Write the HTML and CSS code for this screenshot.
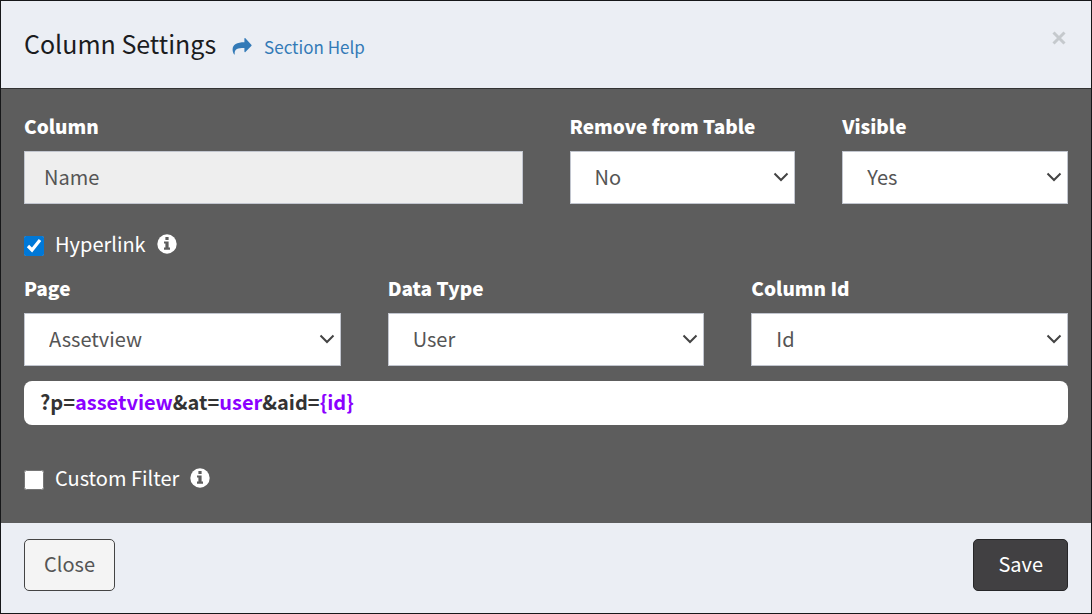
FILE: index.html
```html
<!DOCTYPE html>
<html lang="en">
  <head>
    <meta charset="UTF-8" />
    <title>Column Settings</title>
    <link rel="stylesheet" href="styles.css">
  </head>
  <body>
    <div class="modal">
      <header class="modal-header">
        <h1>Column Settings</h1>
        <a class="help-link" href="#help">
          <svg width="20" height="17" viewBox="0 0 20 17" aria-hidden="true">
            <path d="M12.4 0.6v3.6C5 4.2 0.6 6.4 0.6 11.6c0 1.800.5 3.300 1.400 4.700.3.500.8.300.7-.2C2.300 11.200 5 9.900 12.400 9.900v3.700c0 .6.6.9 1 .5l5.900-6c.4-.4.4-1 0-1.400L13.400.2c-.4-.4-1-.2-1 .4z" />
          </svg>
          Section Help
        </a>
        <button class="dismiss" type="button" aria-label="Dismiss">
          <svg width="14" height="14" viewBox="0 0 14 14" aria-hidden="true">
            <path d="M1.500 1.500l11 11M12.500 1.500l-11 11" />
          </svg>
        </button>
      </header>

      <main class="modal-body">
        <div class="row">
          <div class="field half">
            <label for="column">Column</label>
            <input type="text" id="column" value="Name" readonly />
          </div>
          <div class="field quarter">
            <label for="remove">Remove from Table</label>
            <div class="select">
              <select id="remove">
                <option>No</option>
                <option>Yes</option>
              </select>
              <svg width="16" height="10" viewBox="0 0 16 10" aria-hidden="true"><path d="M1.500 1.500L8 8l6.500-6.500" /></svg>
            </div>
          </div>
          <div class="field quarter">
            <label for="visible">Visible</label>
            <div class="select">
              <select id="visible">
                <option>Yes</option>
                <option>No</option>
              </select>
              <svg width="16" height="10" viewBox="0 0 16 10" aria-hidden="true"><path d="M1.500 1.500L8 8l6.500-6.500" /></svg>
            </div>
          </div>
        </div>

        <div class="check">
          <input type="checkbox" id="hyperlink" checked />
          <label for="hyperlink">Hyperlink</label>
          <svg class="info" width="20" height="20" viewBox="0 0 20 20" aria-hidden="true">
            <circle cx="10" cy="10" r="9.700" />
            <path d="M8.400 3.100h3.200v2.800H8.400zM7 7.400h4.600v6.200H13v2.200H7v-2.200h1.400V9.600H7z" />
          </svg>
        </div>

        <div class="row">
          <div class="field third">
            <label for="page">Page</label>
            <div class="select">
              <select id="page">
                <option>Assetview</option>
              </select>
              <svg width="16" height="10" viewBox="0 0 16 10" aria-hidden="true"><path d="M1.500 1.500L8 8l6.500-6.500" /></svg>
            </div>
          </div>
          <div class="field third">
            <label for="dataType">Data Type</label>
            <div class="select">
              <select id="dataType">
                <option>User</option>
              </select>
              <svg width="16" height="10" viewBox="0 0 16 10" aria-hidden="true"><path d="M1.500 1.500L8 8l6.500-6.500" /></svg>
            </div>
          </div>
          <div class="field third">
            <label for="columnId">Column Id</label>
            <div class="select">
              <select id="columnId">
                <option>Id</option>
              </select>
              <svg width="16" height="10" viewBox="0 0 16 10" aria-hidden="true"><path d="M1.500 1.500L8 8l6.500-6.500" /></svg>
            </div>
          </div>
        </div>

        <div class="url">?p=<span>assetview</span>&amp;at=<span>user</span>&amp;aid=<span>{id}</span></div>

        <div class="check">
          <input type="checkbox" id="customFilter" />
          <label for="customFilter">Custom Filter</label>
          <svg class="info" width="20" height="20" viewBox="0 0 20 20" aria-hidden="true">
            <circle cx="10" cy="10" r="9.700" />
            <path d="M8.400 3.100h3.200v2.800H8.400zM7 7.400h4.600v6.200H13v2.200H7v-2.200h1.400V9.600H7z" />
          </svg>
        </div>
      </main>

      <footer class="modal-footer">
        <button class="btn" type="button">Close</button>
        <button class="btn btn-dark" type="button">Save</button>
      </footer>
    </div>
  </body>
</html>
```
FILE: styles.css
```css
* {
  box-sizing: border-box;
}

body {
  margin: 0;
  font-family: "Noto Sans CJK SC", "Noto Sans", sans-serif;
  font-size: 20px;
  line-height: 28px;
  color: #555;
}

input,
select,
button {
  font: inherit;
  color: inherit;
}

.modal {
  display: flex;
  flex-direction: column;
  min-height: 100vh;
  border: 1px solid #161719;
}

/* header */
.modal-header {
  display: flex;
  align-items: center;
  gap: 16px;
  padding: 23px 23px 25px;
  background: #ebeef4;
  border-bottom: 1px solid #333;
}

h1 {
  margin: 0;
  font-size: 25px;
  font-weight: 400;
  line-height: 39px;
  color: #1b1c1e;
}

.help-link {
  display: flex;
  align-items: center;
  gap: 12px;
  padding-top: 6px;
  font-size: 17px;
  color: #337ab7;
  text-decoration: none;
}

.help-link svg {
  fill: #337ab7;
}

.dismiss {
  display: flex;
  align-self: flex-start;
  margin-left: auto;
  padding: 7px 2px;
  background: none;
  border: 0;
}

.dismiss svg {
  fill: none;
  stroke: #c5c9cd;
  stroke-width: 3;
}

/* form */
.modal-body {
  flex: 1;
  padding: 24px 23px 13px;
  background: #5d5d5d;
  color: #fff;
}

.row {
  display: grid;
  grid-template-columns: repeat(12, 1fr);
  column-gap: 47px;
}

.half {
  grid-column: span 6;
}

.quarter {
  grid-column: span 3;
}

.third {
  grid-column: span 4;
}

.field label {
  display: block;
  margin-bottom: 12px;
  font-size: 19px;
  font-weight: 900;
  line-height: 26px;
}

.field input,
.field select {
  display: block;
  width: 100%;
  height: 53px;
  padding: 0 19px 2px;
  border: 1px solid #c2c6cf;
  border-radius: 0;
  background: #fff;
  color: #555;
}

.field input {
  background: #eee;
}

.select {
  position: relative;
}

.field select {
  appearance: none;
  padding-left: 24px;
}

.select svg {
  position: absolute;
  top: 21px;
  right: 6px;
  fill: none;
  stroke: #444;
  stroke-width: 2;
  pointer-events: none;
}

.check {
  display: flex;
  align-items: center;
  margin: 26px 0 17px;
}

.check input {
  width: 20px;
  height: 20px;
  margin: 3px 11px 0 0;
  accent-color: #0078d7;
}

.info {
  margin-left: 11px;
  fill: #fff;
}

.info path {
  fill: #5d5d5d;
}

.url {
  margin: 15px 0 39px;
  padding: 7px 16px 9px;
  border-radius: 8px;
  background: #fff;
  color: #333;
  font-weight: 600;
}

.url span {
  color: #8b00ff;
}

/* footer */
.modal-footer {
  display: flex;
  justify-content: space-between;
  padding: 16px 23px 22px;
  background: #ebeef4;
}

.btn {
  padding: 10px 19px 12px;
  border: 1px solid #444;
  border-radius: 5px;
  background: #f4f4f4;
}

.btn-dark {
  padding: 10px 24px 12px;
  border-color: #262628;
  background: #414042;
  color: #fff;
}
```
